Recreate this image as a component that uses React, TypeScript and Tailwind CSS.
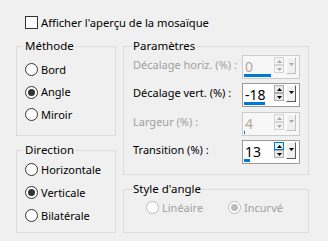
import React from "react";

const FONT = { fontFamily: '"Noto Sans", "Segoe UI", sans-serif' };

function Radio({ checked, disabled }: { checked?: boolean; disabled?: boolean }) {
  return (
    <span
      className={
        "flex h-[13px] w-[13px] shrink-0 items-center justify-center rounded-full border bg-white " +
        (disabled ? "border-[#bcbcbc]" : "border-[#333333]")
      }
    >
      {checked && (
        <span
          className={
            "h-[7px] w-[7px] rounded-full " + (disabled ? "bg-[#bcbcbc]" : "bg-[#333333]")
          }
        />
      )}
    </span>
  );
}

function RadioRow({
  label,
  checked,
  disabled,
  h,
}: {
  label: string;
  checked?: boolean;
  disabled?: boolean;
  h: string;
}) {
  return (
    <div className={"flex items-center gap-[3px] pl-[8px] " + h}>
      <Radio checked={checked} disabled={disabled} />
      <span className={disabled ? "text-[#a0a0a0]" : "text-black"}>{label}</span>
    </div>
  );
}

function Tri({ up, color }: { up?: boolean; color: string }) {
  return (
    <svg width="5" height="3" viewBox="0 0 5 3" className="block">
      {up ? <path d="M0 3 L5 3 L2.5 0 Z" fill={color} /> : <path d="M0 0 L5 0 L2.5 3 Z" fill={color} />}
    </svg>
  );
}

function Spin({
  value,
  bar,
  disabled,
  hover,
}: {
  value: string;
  bar: number;
  disabled?: boolean;
  hover?: boolean;
}) {
  const tri = disabled ? "#a8a8a8" : "#000000";
  const btn = disabled ? "border-[#d4d4d4] bg-[#f4f4f4]" : "border-[#adadad] bg-[#e8e8e8]";
  return (
    <div
      className={
        "flex h-[24px] w-[58px] shrink-0 border " +
        (disabled ? "border-[#cccccc] bg-[#f7f7f7]" : "border-[#9a9a9a] bg-white")
      }
    >
      <div className="relative h-full w-[31px]">
        <span
          className={
            "absolute left-[2px] top-[1px] text-[14px] leading-[20px] " +
            (disabled ? "text-[#b0a8a0]" : "text-black")
          }
        >
          {value}
        </span>
        <span
          className="absolute left-[1px] top-[18px] h-[3px] bg-[#0078d7]"
          style={{ width: bar }}
        />
      </div>
      <div className="mt-[1px] flex w-[10px] flex-col">
        <div
          className={
            "flex h-[8px] items-center justify-center border " +
            (hover ? "border-[#0078d7] bg-[#e5f1fb]" : btn)
          }
        >
          <Tri up color={tri} />
        </div>
        <div className={"flex h-[8px] items-center justify-center border " + btn}>
          <Tri color={tri} />
        </div>
      </div>
      <div
        className={
          "ml-[2px] mt-[1px] flex h-[17px] w-[10px] justify-center border-l border-t border-white bg-[#f0f0f0] pt-[5px] " +
          (disabled
            ? "border-b border-r border-b-[#c0c0c0] border-r-[#c0c0c0]"
            : "border-b border-r border-b-[#5a5a5a] border-r-[#5a5a5a]")
        }
      >
        <Tri color={tri} />
      </div>
    </div>
  );
}

function ParamRow({
  label,
  value,
  bar,
  disabled,
  hover,
  mt,
}: {
  label: string;
  value: string;
  bar: number;
  disabled?: boolean;
  hover?: boolean;
  mt: string;
}) {
  return (
    <div className={"flex items-start justify-between pl-[9px] pr-[8px] " + mt}>
      <span className={"pt-[2px] leading-[16px] " + (disabled ? "text-[#a0a0a0]" : "text-black")}>
        {label}
      </span>
      <Spin value={value} bar={bar} disabled={disabled} hover={hover} />
    </div>
  );
}

export default function App() {
  return (
    <div
      className="h-[241px] w-[328px] overflow-hidden bg-[#f0f0f0] pl-[16px] pt-[16px] text-[11px] leading-[16px] text-black"
      style={FONT}
    >
      <div className="ml-[9px] flex h-[13px] items-center gap-[3px]">
        <span className="h-[13px] w-[13px] shrink-0 border border-[#333333] bg-white" />
        <span className="text-[11.2px]">Afficher l'aperçu de la mosaïque</span>
      </div>

      <div className="mt-[9px] flex gap-[7px]">
        <div className="flex w-[100px] flex-col gap-[6px]">
          <fieldset className="h-[98px] border border-[#dcdcdc]">
            <legend className="ml-[6px] px-[2px] text-[11.5px]">Méthode</legend>
            <div className="pt-[4px]">
              <RadioRow label="Bord" h="h-[23px]" />
              <RadioRow label="Angle" checked h="h-[22px]" />
              <RadioRow label="Miroir" h="h-[23px]" />
            </div>
          </fieldset>
          <fieldset className="h-[91px] border border-[#dcdcdc]">
            <legend className="ml-[6px] px-[2px] text-[11.5px]">Direction</legend>
            <div>
              <RadioRow label="Horizontale" h="h-[23px]" />
              <RadioRow label="Verticale" checked h="h-[23px]" />
              <RadioRow label="Bilatérale" h="h-[23px]" />
            </div>
          </fieldset>
        </div>

        <div className="flex w-[186px] flex-col gap-[6px]">
          <fieldset className="h-[137px] border border-[#dcdcdc]">
            <legend className="ml-[8px] px-[1px] text-[11.5px]">Paramètres</legend>
            <div className="pt-[1px]">
              <ParamRow label="Décalage horiz. (%) :" value="0" bar={27} disabled mt="mt-0" />
              <ParamRow label="Décalage vert. (%) :" value="-18" bar={21} mt="mt-[4px]" />
              <ParamRow label="Largeur (%) :" value="4" bar={1} disabled mt="mt-[5px]" />
              <ParamRow label="Transition (%) :" value="13" bar={6} hover mt="mt-[4px]" />
            </div>
          </fieldset>
          <fieldset className="h-[52px] border border-[#dcdcdc]">
            <legend className="ml-[8px] px-[1px] text-[11.5px]">Style d'angle</legend>
            <div className="flex h-[16px] items-center pl-[22px] pt-[5px]">
              <div className="flex w-[82px] items-center gap-[3px]">
                <Radio disabled />
                <span className="text-[#a0a0a0]">Linéaire</span>
              </div>
              <div className="flex items-center gap-[3px]">
                <Radio checked disabled />
                <span className="text-[#a0a0a0]">Incurvé</span>
              </div>
            </div>
          </fieldset>
        </div>
      </div>
    </div>
  );
}
